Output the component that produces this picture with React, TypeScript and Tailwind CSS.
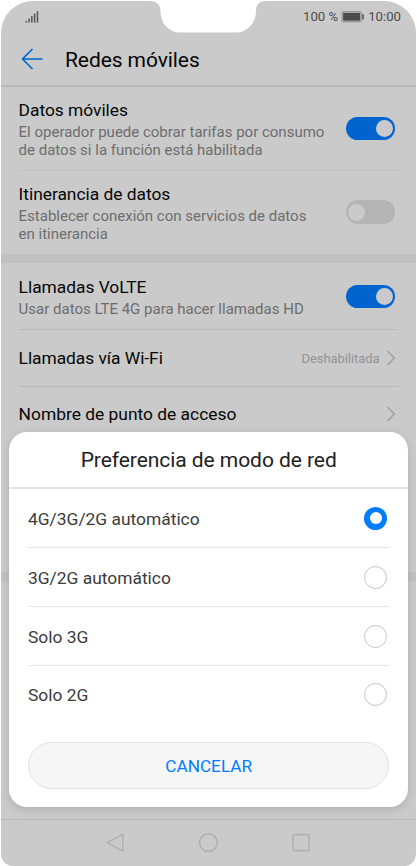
import { useState } from "react";

const options = ["4G/3G/2G automático", "3G/2G automático", "Solo 3G", "Solo 2G"];

function Toggle({ on }: { on: boolean }) {
  return (
    <div
      className={`flex h-[23.5px] w-[49px] shrink-0 items-center rounded-full px-[2px] ${
        on ? "justify-end bg-[#0064cf]" : "mb-px justify-start bg-[#b4b4b4]"
      }`}
    >
      <div className="h-[17px] w-[17px] rounded-full bg-[#cacaca]" />
    </div>
  );
}

function Chevron() {
  return (
    <svg width="10" height="16" viewBox="0 0 10 16" fill="none" className="shrink-0">
      <path d="M1.4 1L8.4 8L1.4 15" stroke="#a0a0a0" strokeWidth="1.4" />
    </svg>
  );
}

function StatusBar() {
  return (
    <div className="flex h-[32px] items-center justify-between pr-[15px] pl-6 text-[#4c4c4c]">
      <svg width="14" height="13" viewBox="0 0 14 13" fill="#5a5a5a">
        <rect x="0.5" y="9.8" width="1.6" height="1.8" />
        <rect x="3.2" y="7.5" width="1.6" height="4.1" />
        <rect x="6" y="5.1" width="1.6" height="6.5" />
        <rect x="8.8" y="2.5" width="1.6" height="9.1" />
        <rect x="11.7" y="0.2" width="1.6" height="11.4" />
      </svg>
      <div className="flex items-center text-[13.2px] leading-4">
        <span>100 %</span>
        <svg width="23" height="12" viewBox="0 0 23 12" className="mr-1 ml-[3px]">
          <rect x="1" y="0.8" width="19.2" height="10" rx="1" fill="none" stroke="#858585" />
          <rect x="2.1" y="1.9" width="17" height="7.8" fill="#4c4c4c" />
          <rect x="21.3" y="3.2" width="1.4" height="5.2" fill="#4c4c4c" />
        </svg>
        <span>10:00</span>
      </div>
    </div>
  );
}

function SettingText({ title, lines }: { title: string; lines: string[] }) {
  return (
    <div className="whitespace-nowrap">
      <div className="mb-[2px] text-[17.4px] leading-[22px] tracking-[-0.03px] text-[#060606]">{title}</div>
      {lines.map((line) => (
        <div key={line} className="text-[15px] leading-[18px] text-[#6d6d6d]">
          {line}
        </div>
      ))}
    </div>
  );
}

function NavBar() {
  return (
    <div className="flex h-[47px] items-center justify-center gap-[73px] border-t border-[#b9b9b9] pr-[1px] pb-[1px]">
      <svg width="20" height="20" viewBox="0 0 20 20" fill="none" stroke="#b0b0b0" strokeWidth="1.6">
        <path d="M17.8 1.1V18.1L2.2 9.6Z" strokeLinejoin="round" />
      </svg>
      <svg width="20" height="20" viewBox="0 0 20 20" fill="none" stroke="#b0b0b0" strokeWidth="1.6">
        <circle cx="10.4" cy="9.6" r="8.8" />
      </svg>
      <svg width="20" height="20" viewBox="0 0 20 20" fill="none" stroke="#b0b0b0" strokeWidth="1.6">
        <rect x="2.2" y="1.6" width="16" height="16" rx="0.8" />
      </svg>
    </div>
  );
}

function Radio({ checked }: { checked: boolean }) {
  if (!checked) {
    return <div className="h-[23px] w-[23px] rounded-full border border-[#c4c4c4]" />;
  }
  return (
    <div className="flex h-[23px] w-[23px] items-center justify-center rounded-full bg-[#007dff]">
      <div className="h-3 w-3 rounded-full bg-white" />
    </div>
  );
}

function NetworkDialog() {
  const [selected, setSelected] = useState(0);

  return (
    <div className="absolute top-[431.5px] right-[9px] left-[9.4px] h-[375.5px] rounded-[18px] bg-white shadow-[0_2px_9px_rgba(0,0,0,0.14)]">
      <div className="flex h-[57.5px] items-center justify-center border-b-2 border-[#e3e3e3] pt-[3px] text-[21px] tracking-[-0.06px] text-[#212121]">
        Preferencia de modo de red
      </div>
      <div className="pr-[18.6px] pl-[18.6px]">
        {options.map((option, i) => (
          <div
            key={option}
            onClick={() => setSelected(i)}
            className="flex h-[59px] items-center justify-between border-b border-[#e6e6e6] pr-[2px] text-[17.4px] text-[#3b3b3b] last-of-type:border-transparent last-of-type:pb-[2px]"
          >
            <span className="pt-[2px]">{option}</span>
            <Radio checked={selected === i} />
          </div>
        ))}
        <button className="mt-[17px] h-[47px] w-full rounded-full border border-[#e1e1e1] bg-[#f6f6f6] pt-[2px] text-[17.2px] text-[#007dff]">
          CANCELAR
        </button>
      </div>
    </div>
  );
}

export default function App() {
  return (
    <div className="relative h-[866px] w-[417px] overflow-hidden bg-white px-px pt-px font-['Roboto',sans-serif]">
      <div className="flex h-[865px] flex-col overflow-hidden rounded-t-[32px] rounded-b-[12px] bg-[#cacaca]">
        <StatusBar />
        <div className="flex h-[54px] items-center border-b-2 border-[#b7b7b7] pl-5">
          <svg width="22" height="22" viewBox="0 0 22 22" fill="none" stroke="#0064cf" strokeWidth="1.6">
            <path d="M21.5 11H1.5M11.5 1L1.5 11L11.5 21" />
          </svg>
          <h1 className="ml-[22px] pt-[4px] text-[21px] tracking-[-0.08px] text-[#060606]">Redes móviles</h1>
        </div>

        <div className="px-[17.6px]">
          <div className="flex h-[84px] items-center justify-between border-b border-[#bebebe] pr-[3.4px]">
            <SettingText
              title="Datos móviles"
              lines={["El operador puede cobrar tarifas por consumo", "de datos si la función está habilitada"]}
            />
            <Toggle on />
          </div>
          <div className="flex h-[83px] items-center justify-between pr-[3.4px]">
            <SettingText
              title="Itinerancia de datos"
              lines={["Establecer conexión con servicios de datos", "en itinerancia"]}
            />
            <Toggle on={false} />
          </div>
        </div>

        <div className="h-[9px] bg-[#c1c1c1]" />

        <div className="px-[17.6px]">
          <div className="flex h-[67px] items-center justify-between border-b border-[#b9b9b9] pt-[1px] pr-[3.4px]">
            <SettingText title="Llamadas VoLTE" lines={["Usar datos LTE 4G para hacer llamadas HD"]} />
            <Toggle on />
          </div>
          <div className="flex h-[57px] items-center justify-between border-b border-[#b9b9b9] pr-[2px]">
            <span className="text-[17.4px] tracking-[-0.05px] text-[#060606]">Llamadas vía Wi-Fi</span>
            <div className="flex items-center gap-[7px] text-[13px] text-[#939393]">
              <span className="pt-px tracking-[-0.08px]">Deshabilitada</span>
              <Chevron />
            </div>
          </div>
          <div className="flex h-[53px] items-center justify-between pr-[2px]">
            <span className="pt-[1px] text-[17.4px] text-[#060606]">Nombre de punto de acceso</span>
            <Chevron />
          </div>
        </div>

        <div className="mt-[132px] h-[9px] bg-[#c1c1c1]" />
        <div className="flex-1" />
        <NavBar />
      </div>

      {/* camera notch */}
      <svg className="absolute top-0 left-[150px]" width="116" height="33" viewBox="0 0 116 33">
        <path d="M0 0V1C7 1 10.5 5 10.5 11C10.5 22 18 32.5 30 32.5H86C98 32.5 106 22 106 11C106 5 109 1 116 1V0Z" fill="#ffffff" />
      </svg>

      <NetworkDialog />
    </div>
  );
}
